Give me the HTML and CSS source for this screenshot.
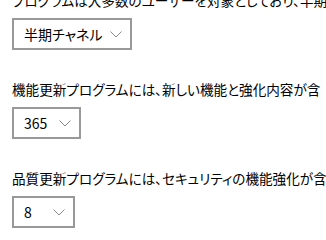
FILE: index.html
```html
<!DOCTYPE html>
<html lang="ja">
<head>
<meta charset="utf-8">
<link rel="stylesheet" href="styles.css">
</head>
<body>
<div class="page">
  <section class="setting">
    <p class="label">プログラムは大多数のユーザーを対象としており、半期</p>
    <div class="select select-wide"><span class="value">半期チャネル</span><svg class="chev" width="12" height="7" viewBox="0 0 12 7"><polyline points="0.5,0.5 6,6 11.5,0.5" fill="none" stroke="#8a8a8a" stroke-width="1"/></svg></div>
  </section>
  <section class="setting">
    <p class="label">機能更新プログラムには、新しい機能と強化内容が含</p>
    <div class="select select-mid"><span class="value">365</span><svg class="chev" width="12" height="7" viewBox="0 0 12 7"><polyline points="0.5,0.5 6,6 11.5,0.5" fill="none" stroke="#8a8a8a" stroke-width="1"/></svg></div>
  </section>
  <section class="setting">
    <p class="label">品質更新プログラムには、セキュリティの機能強化が含</p>
    <div class="select select-narrow"><span class="value">8</span><svg class="chev" width="12" height="7" viewBox="0 0 12 7"><polyline points="0.5,0.5 6,6 11.5,0.5" fill="none" stroke="#8a8a8a" stroke-width="1"/></svg></div>
  </section>
</div>
</body>
</html>
```

FILE: styles.css
```css
html, body {
  margin: 0;
  padding: 0;
  background: #ffffff;
  overflow: hidden;
}
.page {
  margin-top: -10px;
  padding-left: 12px;
  font-family: "Noto Sans CJK JP", "Noto Sans", sans-serif;
  font-feature-settings: "palt";
  color: #000000;
  display: flex;
  flex-direction: column;
  gap: 29px;
}
.setting {
  display: flex;
  flex-direction: column;
  align-items: flex-start;
  gap: 8px;
}
.label {
  margin: 0;
  font-size: 13.6px;
  line-height: 20px;
  white-space: nowrap;
}
.select {
  box-sizing: border-box;
  height: 32px;
  border: 2px solid #999999;
  display: flex;
  align-items: center;
  justify-content: space-between;
  padding: 0 8px 0 10px;
  font-size: 14px;
}
.select-wide { width: 120px; }
.select-mid { width: 69px; }
.select-narrow { width: 63px; }
.chev { display: block; }
```
